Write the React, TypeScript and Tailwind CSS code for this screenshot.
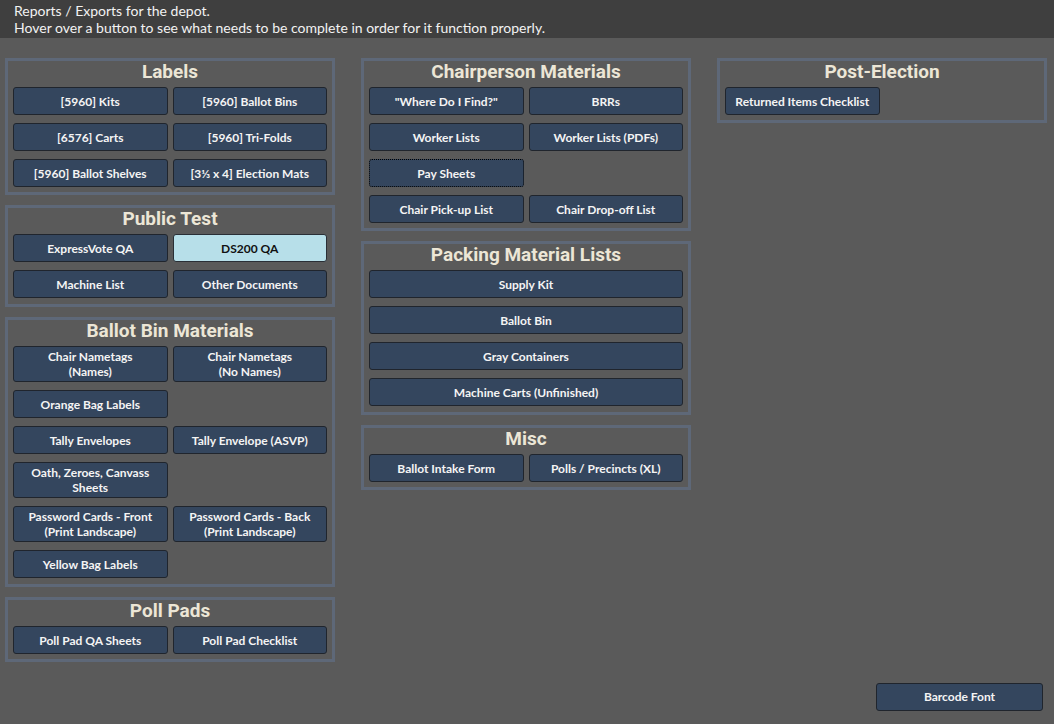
import React from 'react';

type Btn = { label: string; lines?: string[]; active?: boolean; focused?: boolean; blank?: boolean };

const Button = ({ b, full }: { b: Btn; full?: boolean }) => {
  if (b.blank) return <div />;
  const tall = !!b.lines;
  return (
    <button
      className={[
        'rounded-[3px] border font-bold text-[12px] leading-[15px] flex flex-col items-center justify-center',
        tall ? 'h-[36px]' : 'h-[28px]',
        full ? 'col-span-2' : '',
        b.active ? 'bg-[#b7dfe9] text-[#111111] border-[#2a2f36]' : 'bg-[#34465e] text-[#f4f4f4]',
        b.focused ? 'border-dotted border-black' : b.active ? '' : 'border-[#20252d]',
      ].join(' ')}
    >
      {b.lines ? b.lines.map((l) => <span key={l}>{l}</span>) : b.label}
    </button>
  );
};

// loose = one extra px of bottom padding, as some of the group boxes have
const Panel = ({ title, items, full, loose }: { title: string; items: Btn[]; full?: boolean; loose?: boolean }) => (
  <section className={`border-[3px] border-[#5e6878] px-[5px] ${loose ? 'pb-[6px]' : 'pb-[5px]'}`}>
    <h2 className="h-[26px] text-center font-['Roboto'] font-bold text-[19px] leading-[21px] text-[#ece6d6]">
      {title}
    </h2>
    <div className="grid grid-cols-2 gap-x-[5px] gap-y-[8px]">
      {items.map((b, i) => (
        <Button key={i} b={b} full={full} />
      ))}
    </div>
  </section>
);

const t = (label: string): Btn => ({ label });
const two = (a: string, b: string): Btn => ({ label: a + ' ' + b, lines: [a, b] });
const blank: Btn = { label: '', blank: true };

export default function App() {
  return (
    <div className="h-[724px] w-[1054px] bg-[#5a5a5a] flex flex-col font-['Lato',sans-serif] overflow-hidden">
      <header className="h-[38px] bg-[#3f3f3f] px-[14px] pt-[2px] text-[14px] leading-[17px] text-[#f2f2f2]">
        <div>Reports / Exports for the depot.</div>
        <div>Hover over a button to see what needs to be complete in order for it function properly.</div>
      </header>

      <main className="flex-1 grid grid-cols-[330px_330px_330px] gap-x-[26px] pl-[5px] pt-[20px] items-start">
        <div className="flex flex-col gap-[10px]">
          <Panel
            title="Labels"
            items={[
              t('[5960] Kits'),
              t('[5960] Ballot Bins'),
              t('[6576] Carts'),
              t('[5960] Tri-Folds'),
              t('[5960] Ballot Shelves'),
              t('[3⅓ x 4] Election Mats'),
            ]}
          />
          <Panel
            title="Public Test"
            loose
            items={[t('ExpressVote QA'), { label: 'DS200 QA', active: true }, t('Machine List'), t('Other Documents')]}
          />
          <Panel
            title="Ballot Bin Materials"
            loose
            items={[
              two('Chair Nametags', '(Names)'),
              two('Chair Nametags', '(No Names)'),
              t('Orange Bag Labels'),
              blank,
              t('Tally Envelopes'),
              t('Tally Envelope (ASVP)'),
              two('Oath, Zeroes, Canvass', 'Sheets'),
              blank,
              two('Password Cards - Front', '(Print Landscape)'),
              two('Password Cards - Back', '(Print Landscape)'),
              t('Yellow Bag Labels'),
              blank,
            ]}
          />
          <Panel title="Poll Pads" items={[t('Poll Pad QA Sheets'), t('Poll Pad Checklist')]} />
        </div>

        <div className="flex flex-col gap-[10px]">
          <Panel
            title="Chairperson Materials"
            items={[
              t('"Where Do I Find?"'),
              t('BRRs'),
              t('Worker Lists'),
              t('Worker Lists (PDFs)'),
              { label: 'Pay Sheets', focused: true },
              blank,
              t('Chair Pick-up List'),
              t('Chair Drop-off List'),
            ]}
          />
          <Panel
            title="Packing Material Lists"
            full
            loose
            items={[t('Supply Kit'), t('Ballot Bin'), t('Gray Containers'), t('Machine Carts (Unfinished)')]}
          />
          <Panel title="Misc" items={[t('Ballot Intake Form'), t('Polls / Precincts (XL)')]} />
        </div>

        <div className="flex flex-col gap-[10px]">
          <Panel title="Post-Election" items={[t('Returned Items Checklist'), blank]} />
        </div>
      </main>

      <footer className="flex justify-end pr-[11px] pb-[13px]">
        <button className="w-[167px] h-[28px] rounded-[3px] border border-[#20252d] bg-[#34465e] text-[#f4f4f4] font-bold text-[12px]">
          Barcode Font
        </button>
      </footer>
    </div>
  );
}
